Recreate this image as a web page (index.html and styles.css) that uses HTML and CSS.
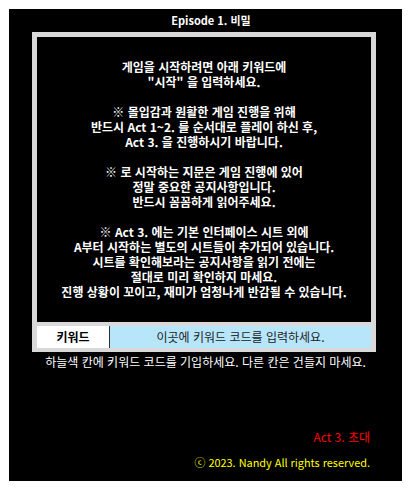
FILE: index.html
```html
<!DOCTYPE html>
<html lang="ko">
<head>
    <meta charset="UTF-8">
    <meta name="viewport" content="width=device-width, initial-scale=1.0">
    <title>Episode 1. 비밀</title>
    <link rel="stylesheet" href="styles.css">
</head>
<body>
    <!-- 시트 전체 -->
    <div class="sheet">
        <div class="title">Episode 1. 비밀</div>

        <!-- 공지 박스 -->
        <div class="frame">
            <div class="notice">
                <p>게임을 시작하려면 아래 키워드에<br>"시작" 을 입력하세요.</p>
                <p>※ 몰입감과 원활한 게임 진행을 위해<br>반드시 Act 1~2. 를 순서대로 플레이 하신 후,<br>Act 3. 을 진행하시기 바랍니다.</p>
                <p>※ 로 시작하는 지문은 게임 진행에 있어<br>정말 중요한 공지사항입니다.<br>반드시 꼼꼼하게 읽어주세요.</p>
                <p>※ Act 3. 에는 기본 인터페이스 시트 외에<br>A부터 시작하는 별도의 시트들이 추가되어 있습니다.<br>시트를 확인해보라는 공지사항을 읽기 전에는<br>절대로 미리 확인하지 마세요.<br>진행 상황이 꼬이고, 재미가 엄청나게 반감될 수 있습니다.</p>
            </div>
            <div class="keyword-row">
                <div class="keyword-label">키워드</div>
                <div class="keyword-input">이곳에 키워드 코드를 입력하세요.</div>
            </div>
        </div>

        <div class="hint">하늘색 칸에 키워드 코드를 기입하세요. 다른 칸은 건들지 마세요.</div>

        <!-- 하단 -->
        <div class="footer">
            <div class="next-act">Act 3. 초대</div>
            <div class="copyright">ⓒ 2023. Nandy All rights reserved.</div>
        </div>
    </div>
</body>
</html>
```

FILE: styles.css
```css
/* 기본 */
body {
    margin: 9px;
    background: #ffffff;
    font-family: "Noto Sans CJK KR", "Noto Sans", sans-serif;
    font-size: 12px;
}

.sheet {
    width: 393px;
    height: 472px;
    background: #000;
    color: #fff;
    display: flex;
    flex-direction: column;
}

.title {
    height: 23px;
    line-height: 22px;
    padding-left: 11px;
    text-align: center;
    font-weight: bold;
    font-size: 11px;
}

/* 회색 테두리 박스 */
.frame {
    width: 334px;
    margin-left: 23px;
    background: #d9d9d9;
    padding: 5px 5px 4px;
}

.notice {
    height: 263px;
    background: #000;
    padding-top: 22px;
    text-align: center;
    font-weight: bold;
    font-size: 12px;
    line-height: 15px;
}

.notice p {
    margin: 0 0 15px;
}

.keyword-row {
    display: flex;
    height: 22px;
    margin-top: 4px;
    line-height: 22px;
}

.keyword-label {
    width: 72px;
    background: #fff;
    color: #000;
    text-align: center;
    font-weight: bold;
    border-right: 1px solid #333;
}

.keyword-input {
    flex: 1;
    background: #b7e6fb;
    color: #222;
    text-align: center;
    font-size: 12px;
}

.hint {
    margin-top: 2px;
    line-height: 16px;
    text-align: center;
    font-size: 12px;
}

/* 하단 */
.footer {
    margin-top: auto;
    padding: 0 32px 11px 0;
    text-align: right;
    font-size: 12px;
}

.next-act {
    color: #ff0000;
    line-height: 16px;
    margin-bottom: 9px;
}

.copyright {
    color: #ffff00;
    font-size: 10.9px;
    line-height: 16px;
}
```
